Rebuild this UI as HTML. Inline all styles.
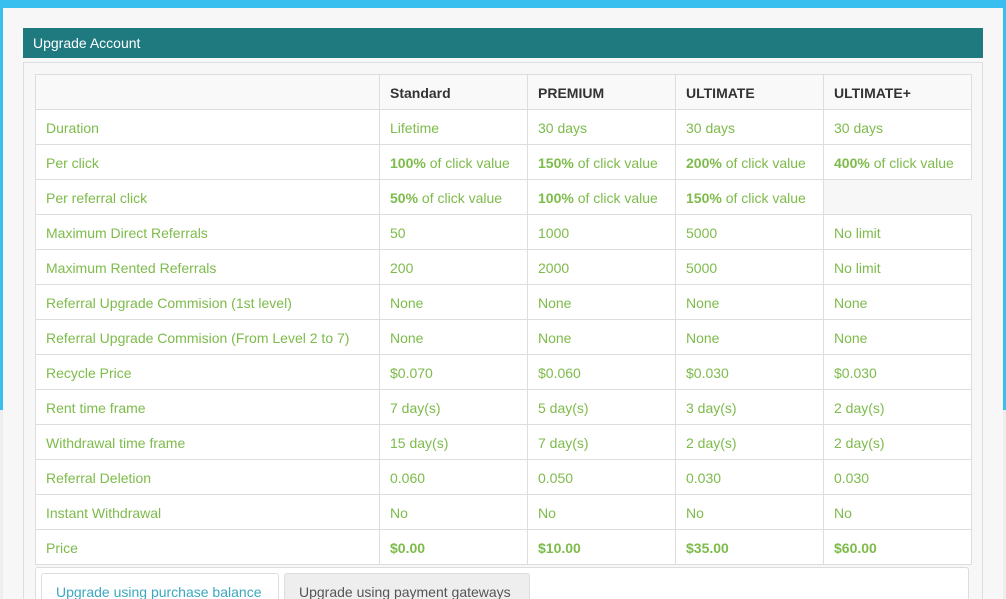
<!DOCTYPE html>
<html><head><style>
html,body{margin:0;padding:0;width:1006px;height:599px;overflow:hidden;background:#eeeeee;font-family:"Liberation Sans",Arial,sans-serif;font-size:14px;position:relative;}
.bgtop{position:absolute;left:0;top:0;width:1006px;height:410px;background:#38bff0;}
.page{position:absolute;left:3px;top:8px;width:1000px;height:591px;background:#f7f7f7;}
.hdr{position:absolute;left:23px;top:28px;width:960px;height:30px;background:#1f7a80;color:#fff;font-size:14px;line-height:30px;box-sizing:border-box;padding-left:10px;}
.panel{position:absolute;left:23px;top:62px;width:960px;height:537px;border:1px solid #ddd;border-bottom:none;box-sizing:border-box;background:#f7f7f7;}
table{position:absolute;left:35px;top:74px;border-collapse:collapse;}
tr{height:35px;}
td,th{border:1px solid #ddd;height:35px;padding:1px 0 0 10px;text-align:left;color:#7dbb4a;font-weight:normal;background:#fff;box-sizing:border-box;white-space:nowrap;}
th{background:#f9f9f9;color:#333;font-weight:bold;}
td b{font-weight:bold;}
td.e{background:#f7f7f7;border:none;border-left:1px solid #ddd;}
.tabs{position:absolute;left:35px;top:567px;width:932px;height:40px;border:1px solid #ddd;border-radius:3px;background:#fff;}
.t1,.t2{position:absolute;top:5px;height:40px;border:1px solid #ddd;border-radius:3px 3px 0 0;box-sizing:border-box;padding:10px 0 0 14px;font-size:14px;white-space:nowrap;}
.t1{left:5px;width:238px;color:#3aa8c0;background:#fff;}
.t2{left:248px;width:246px;color:#555;background:#eee;}
</style></head><body>
<div class="bgtop"></div>
<div class="page"></div>
<div class="hdr">Upgrade Account</div>
<div class="panel"></div>
<table>
<tr><th style="width:344px"></th><th style="width:148px">Standard</th><th style="width:148px">PREMIUM</th><th style="width:148px">ULTIMATE</th><th style="width:148px">ULTIMATE+</th></tr>
<tr><td>Duration</td><td>Lifetime</td><td>30 days</td><td>30 days</td><td>30 days</td></tr>
<tr><td>Per click</td><td><b>100%</b> of click value</td><td><b>150%</b> of click value</td><td><b>200%</b> of click value</td><td><b>400%</b> of click value</td></tr>
<tr><td>Per referral click</td><td><b>50%</b> of click value</td><td><b>100%</b> of click value</td><td><b>150%</b> of click value</td><td class="e"></td></tr>
<tr><td>Maximum Direct Referrals</td><td>50</td><td>1000</td><td>5000</td><td>No limit</td></tr>
<tr><td>Maximum Rented Referrals</td><td>200</td><td>2000</td><td>5000</td><td>No limit</td></tr>
<tr><td>Referral Upgrade Commision (1st level)</td><td>None</td><td>None</td><td>None</td><td>None</td></tr>
<tr><td>Referral Upgrade Commision (From Level 2 to 7)</td><td>None</td><td>None</td><td>None</td><td>None</td></tr>
<tr><td>Recycle Price</td><td>$0.070</td><td>$0.060</td><td>$0.030</td><td>$0.030</td></tr>
<tr><td>Rent time frame</td><td>7 day(s)</td><td>5 day(s)</td><td>3 day(s)</td><td>2 day(s)</td></tr>
<tr><td>Withdrawal time frame</td><td>15 day(s)</td><td>7 day(s)</td><td>2 day(s)</td><td>2 day(s)</td></tr>
<tr><td>Referral Deletion</td><td>0.060</td><td>0.050</td><td>0.030</td><td>0.030</td></tr>
<tr><td>Instant Withdrawal</td><td>No</td><td>No</td><td>No</td><td>No</td></tr>
<tr><td>Price</td><td><b>$0.00</b></td><td><b>$10.00</b></td><td><b>$35.00</b></td><td><b>$60.00</b></td></tr>
</table>
<div class="tabs"><div class="t1">Upgrade using purchase balance</div><div class="t2">Upgrade using payment gateways</div></div>
</body></html>
